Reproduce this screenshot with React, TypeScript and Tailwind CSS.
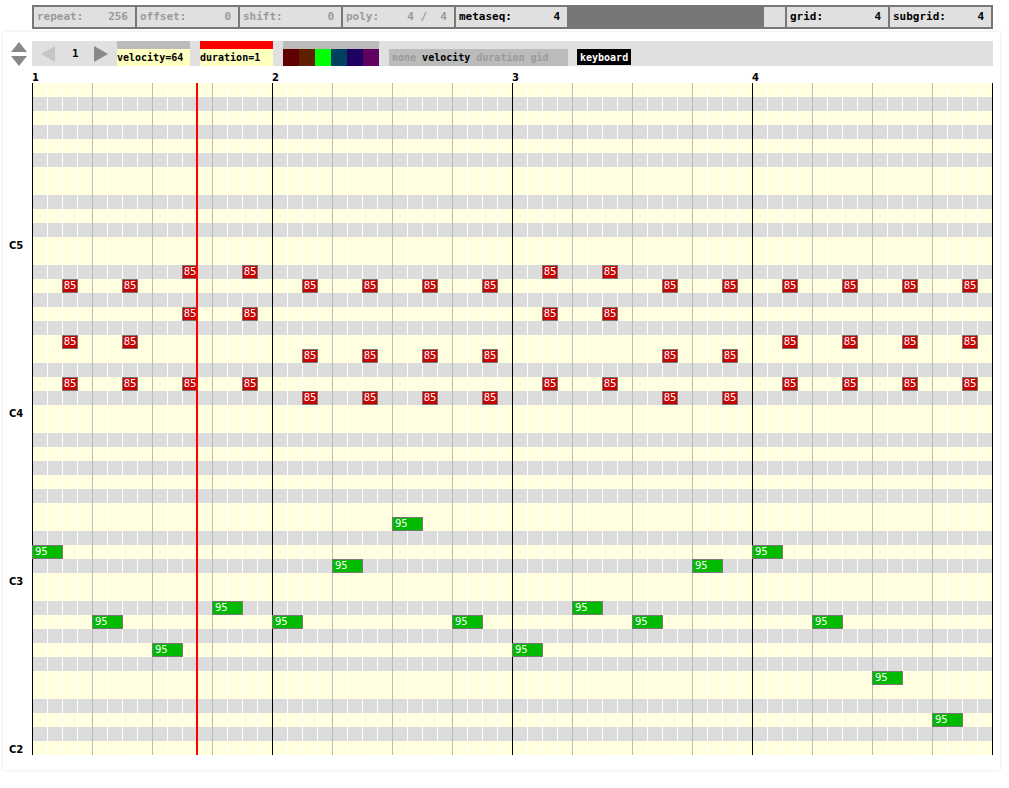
import React from "react";

const MONO = "font-['DejaVu_Sans_Mono',monospace]";
const SANS = "font-['DejaVu_Sans',sans-serif]";

const ROWS = 48;
const COLS = 64;
const ROW_H = 14;
const COL_W = 15;

const BLACK_PCS = [1, 3, 6, 8, 10];

type Note = { row: number; col: number; len: number; v: number };

const redRows: [number, number[]][] = [
  [13, [10, 14, 34, 38]],
  [14, [2, 6, 18, 22, 26, 30, 42, 46, 50, 54, 58, 62]],
  [16, [10, 14, 34, 38]],
  [18, [2, 6, 50, 54, 58, 62]],
  [19, [18, 22, 26, 30, 42, 46]],
  [21, [2, 6, 10, 14, 34, 38, 50, 54, 58, 62]],
  [22, [18, 22, 26, 30, 42, 46]],
];

const greenRows: [number, number[]][] = [
  [31, [24]],
  [33, [0, 48]],
  [34, [20, 44]],
  [37, [12, 36]],
  [38, [4, 16, 28, 40, 52]],
  [40, [8, 32]],
  [42, [56]],
  [45, [60]],
];

const notes: Note[] = [
  ...redRows.flatMap(([row, cols]) => cols.map((col) => ({ row, col, len: 1, v: 85 }))),
  ...greenRows.flatMap(([row, cols]) => cols.map((col) => ({ row, col, len: 2, v: 95 }))),
];

function Field({ label, value, w, active }: { label: string; value: string; w: string; active?: boolean }) {
  return (
    <div
      className={`${w} h-full bg-[#e0e0e0] flex items-center justify-between pl-[3px] pr-[7px] whitespace-pre ${
        active ? "text-black" : "text-[#9a9a9a]"
      }`}
    >
      <span>{label}</span>
      <span>{value}</span>
    </div>
  );
}

function TopBar() {
  return (
    <div className={`ml-[32px] mt-[5px] w-[961px] h-[24px] border-2 border-[#777] bg-[#777] flex gap-[2px] text-[11px] font-bold ${MONO}`}>
      <Field label="repeat:" value="256" w="w-[101px]" />
      <Field label="offset:" value="0" w="w-[101px]" />
      <Field label="shift:" value="0" w="w-[101px]" />
      <Field label="poly:" value="4 /  4" w="w-[111px]" />
      <Field label="metaseq:" value="4" w="w-[111px]" active />
      <div className="flex-1" />
      <div className="w-[21px] h-full bg-[#e0e0e0]" />
      <Field label="grid:" value="4" w="w-[101px]" active />
      <Field label="subgrid:" value="4" w="w-[101px]" active />
    </div>
  );
}

function ToolBar() {
  const swatches = ["#600000", "#602000", "#00ff00", "#004060", "#200060", "#600060"];
  return (
    <div className="flex">
      <div className="w-[29px] flex flex-col items-start pl-[8px] gap-[2px] pt-[1px]">
        <svg width="16" height="11" viewBox="0 0 16 11">
          <polygon points="8,0 16,10 0,10" fill="#888" />
        </svg>
        <svg width="16" height="11" viewBox="0 0 16 11">
          <polygon points="0,1 16,1 8,11" fill="#888" />
        </svg>
      </div>
      <div className={`w-[961px] h-[25px] bg-[#e0e0e0] flex text-[10px] font-bold ${MONO}`}>
        <div className="w-[85px] flex items-center">
          <svg width="14" height="16" viewBox="0 0 14 16" className="ml-[9px]">
            <polygon points="14,0 14,16 0,8" fill="#c6c6c6" />
          </svg>
          <span className="ml-[17px] mt-[2px] text-[11px] text-black">1</span>
          <svg width="14" height="16" viewBox="0 0 14 16" className="ml-[15px]">
            <polygon points="0,0 14,8 0,16" fill="#888" />
          </svg>
        </div>
        <div className="w-[73px] flex flex-col">
          <div className="h-[8px] bg-[#bbb]" />
          <div className="flex-1 bg-[#ffffc0] text-black flex items-center">velocity=64</div>
        </div>
        <div className="w-[73px] ml-[10px] flex flex-col">
          <div className="h-[8px] bg-[#ff0000]" />
          <div className="flex-1 bg-[#ffffc0] text-black flex items-center">duration=1</div>
        </div>
        <div className="w-[96px] ml-[10px] flex flex-col">
          <div className="h-[8px] bg-[#bbb]" />
          <div className="flex-1 flex">
            {swatches.map((c) => (
              <div key={c} className="w-[16px] h-full" style={{ backgroundColor: c }} />
            ))}
          </div>
        </div>
        <div className="w-[179px] ml-[10px] mt-[8px] bg-[#bbb] flex items-center pl-[3px] text-[#9a9a9a] whitespace-pre">
          none <span className="text-black">velocity</span> duration gid
        </div>
        <div className="ml-[9px] mt-[8px] mb-[1px] bg-black text-white flex items-center px-[3px]">keyboard</div>
      </div>
    </div>
  );
}

function PianoRoll() {
  return (
    <div className="flex">
      <div className={`w-[29px] flex flex-col text-[10px] font-bold text-black ${SANS}`}>
        {Array.from({ length: ROWS }, (_, i) => {
          const n = ROWS - 1 - i;
          const isC = n % 12 === 0;
          return (
            <div key={i} className="h-[14px] flex items-center pl-[6px] pt-[3px] leading-none">
              {isC ? `C${2 + Math.floor(n / 12)}` : ""}
            </div>
          );
        })}
      </div>
      <div className="relative w-[961px] h-[672px] border-r border-black">
        {Array.from({ length: ROWS }, (_, i) => {
          const pc = (ROWS - 1 - i) % 12;
          return (
            <div
              key={i}
              className={`h-[14px] ${BLACK_PCS.includes(pc) ? "bg-[#dcdcdc]" : "bg-[#ffffe0]"}`}
            />
          );
        })}
        <div className="absolute inset-0 flex">
          {Array.from({ length: COLS }, (_, c) => (
            <div
              key={c}
              className={`w-[15px] h-full border-l ${
                c % 16 === 0 ? "border-black" : c % 4 === 0 ? "border-[#bbb]" : "border-white"
              }`}
            />
          ))}
        </div>
        {notes.map((n, k) => (
          <div
            key={k}
            className={`absolute h-[14px] border border-[#777] text-white text-[10px] leading-none flex items-center ${SANS} ${
              n.v === 85 ? "bg-[#cc0000] justify-center" : "bg-[#00bb00] pl-[2px]"
            }`}
            style={{ left: n.col * COL_W, top: n.row * ROW_H, width: n.len * COL_W + 1 }}
          >
            {n.v}
          </div>
        ))}
        <div className="absolute top-0 bottom-0 left-[164px] w-[2px] bg-[#ff0000]" />
      </div>
    </div>
  );
}

export default function App() {
  return (
    <div className="w-[1009px] h-[788px] bg-white overflow-hidden">
      <TopBar />
      <div className="ml-[3px] mt-[3px] w-[997px] h-[738px] bg-white shadow-[0_0_3px_rgba(0,0,0,0.12)] pt-[9px]">
        <ToolBar />
        <div className={`ml-[29px] mt-[3px] h-[14px] flex text-[10px] font-bold text-black ${SANS}`}>
          {[1, 2, 3, 4].map((b) => (
            <div key={b} className="w-[240px] leading-none pt-[4px]">
              {b}
            </div>
          ))}
        </div>
        <PianoRoll />
      </div>
    </div>
  );
}
